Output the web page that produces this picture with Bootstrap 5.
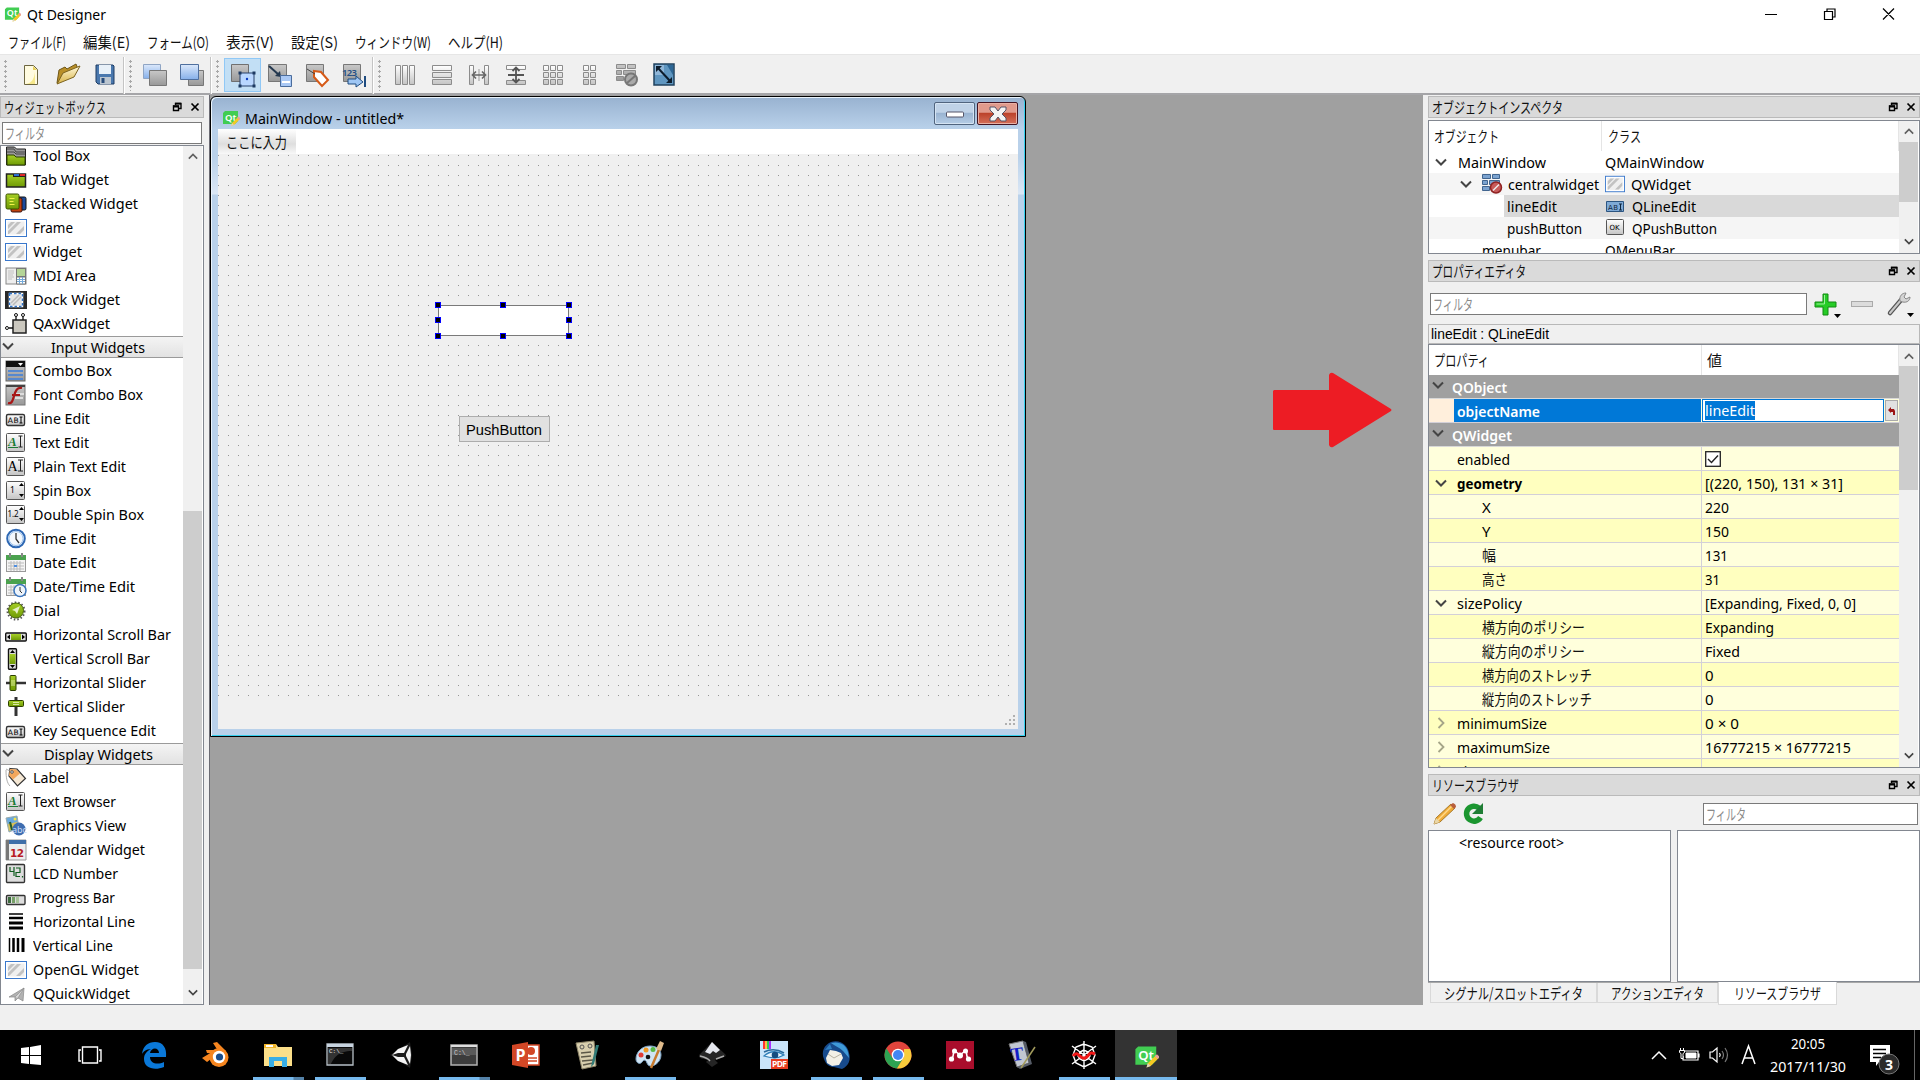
<!DOCTYPE html>
<html lang="ja">
<head>
<meta charset="utf-8">
<title>Qt Designer</title>
<link rel="stylesheet" href="https://cdn.jsdelivr.net/npm/bootstrap@5.3.0/dist/css/bootstrap.min.css">
<script src="https://cdn.jsdelivr.net/npm/bootstrap@5.3.0/dist/js/bootstrap.bundle.min.js"></script>
<style>
body{width:1920px;height:1080px;overflow:hidden;background:#f0f0f0;color:#000;font:15px/20px "Noto Sans","Noto Sans CJK JP",sans-serif}
svg{display:block;flex:none;overflow:visible}
[data-w]{display:inline-block;white-space:nowrap;flex:none}
[data-w]>span{display:inline-block;transform-origin:0 50%}
.titlebar{height:28px;background:#fff;padding:0 19px 0 4px}
.menus{height:26px;background:#fff;padding:2px 0 0 8px;gap:17px}
.menus span{line-height:24px}
.tools{height:41px;border-top:1px solid #e6e6e6;border-bottom:2px solid #a5a5a8;padding-top:2px}
.grip{width:3px;height:32px;background:radial-gradient(circle,#a8a8a8 1px,transparent 1.3px) 0 0/3px 5px}
.tsep{width:2px;height:37px;background:#c4c4c4;border-right:1px solid #fff}
.tool{width:37px;height:34px}
.tool.on{background:#c2dff5;border:1px solid #90c8f6}
.left-dock{width:209px;padding-top:1px}
.right-dock{width:499px;padding:1px 0 0 5px;border-left:2px solid #a0a0a0}
.dockhead{height:22px;background:#dadada;border:1px solid #bababa;padding:0 1px 0 3px}
.gothic{font-family:"Noto Sans CJK JP",sans-serif;color:#111}
.field{height:22px;background:#fff;border:1px solid #7a7a7a;color:#8a8a8a;padding-left:2px;display:flex;align-items:center}
.pane{background:#fff;border:1px solid #828790;overflow:hidden}
.wlist{margin-top:1px;width:204px;height:860px}
.wrow{height:24px;padding-left:4px;gap:6px}
.wrow svg{width:22px;height:22px}
.wrow [data-w]{margin-top:-2px}
.cat{height:22px;margin-bottom:1px;border-top:1px solid #9a9a9a;border-bottom:1px solid #9a9a9a;background:linear-gradient(#f4f4f4,#e2e2e2)}
.sbar{width:19px;background:#f0f0f0;flex:none;margin-right:1px}
.thumb{background:#cdcdcd}
.mdi{background:#a0a0a0;width:1212px;border-left:1px solid #6c6c74}
.subwin{left:0;top:0;width:816px;height:641px;border:1px solid #000;border-radius:6px 6px 0 0;background:linear-gradient(#98b2d0,#b9d1ea 32px,#b9d1ea 60px,#dbe7f5 97px,#b9d1ea 98px);box-shadow:inset 1px 1px #eaf4fc,inset -1px -1px #35d0ee;padding:1px 7px 6px 7px}
.subhead{height:31px;padding:4px 0 0 4px}
.wbtn{width:41px;height:23px;border-radius:2px}
.mini{border:1px solid #50647e;box-shadow:inset 0 0 0 1px #d5e4f3;background:linear-gradient(#bfd2e7 45%,#98b2d0 46%,#b5cde6)}
.shut{border:1px solid #431422;box-shadow:inset 0 0 0 1px #e8b0a4;background:linear-gradient(#e09a8c 45%,#ba3f27 46%,#d4705a)}
.submenu{height:25px;background:#fff}
.typehere{width:78px;background:linear-gradient(#fff,#dedede 60%,#f8f8f8);padding-left:8px}
.canvas{height:553px;background:#f0f0f0}
.ledit{left:220px;top:151px;width:131px;height:31px;background:#fff;border:1px solid #7a7a7a}
.hnd{width:6px;height:6px;background:#000;border:1px solid #00f}
.pbtn{left:241px;top:262px;width:91px;height:26px;background:#e1e1e1;border:1px solid #adadad;font:14.5px/26px "Liberation Sans",sans-serif;padding-left:6px}
.substat{height:22px;background:#f0f0f0}
.trow{height:22px}
.alt{background:#f5f5f5}
.prow{height:24px;border-bottom:1px solid #d3d0d8;background:#ffffdc}
.prow.deep{background:#ffffbf}
.prow.grp{background:#a0a0a0;color:#fff;border-color:#d8d8d8}
.pname{width:273px;flex:none;height:100%;border-right:1px solid #d3d0d8}
.pval{padding-left:3px}
.arr{width:28px;flex:none;padding-left:6px}
.i1{width:53px;flex:none}
.tabx{height:20px;border:1px solid #d9d9d9;border-top:0;background:#f0f0f0}
.tabx.cur{height:23px;background:#fff;margin-top:-1px}
.taskbar{height:50px;background:#000;color:#fff}
.slot{width:62px;height:50px}
.slot .run{width:51px;height:3px;background:#76b9ed;left:6px;bottom:0}
.run.two{background:linear-gradient(90deg,#76b9ed 40px,#5482a8 41px)!important}
.slot svg{width:28px;height:28px}
.slot.cur{background:#333}
.slot.cur .run{width:62px;left:0}
</style>
</head>
<body>
<svg width="0" height="0" class="position-absolute">
<defs>
<linearGradient id="gs" x2="0" y2="1"><stop stop-color="#fff"/><stop offset="1" stop-color="#c4c4c4"/></linearGradient>
<linearGradient id="gg" x2="0" y2="1"><stop stop-color="#c8c8c8"/><stop offset="1" stop-color="#989898"/></linearGradient>
<linearGradient id="gb" x2="0" y2="1"><stop stop-color="#dbe8fb"/><stop offset="1" stop-color="#86b0ea"/></linearGradient>
<linearGradient id="gy" x2="0" y2="1"><stop stop-color="#fff9dc"/><stop offset="1" stop-color="#d9b345"/></linearGradient>
<linearGradient id="gr" x2="0" y2="1"><stop stop-color="#a6cf26"/><stop offset="1" stop-color="#6f9a05"/></linearGradient>
</defs>
<symbol id="qt" viewBox="0 0 18 17"><path d="M3 1h13v10l-3 3H1V3z" fill="#41cd52"/><text x="3" y="10.5" font-family="Noto Sans" font-size="9.5" font-weight="600" fill="#fff">Qt</text><path d="M9 16l1-3 6-6 2 2-6 6z" fill="#f5c823"/><path d="M15 8l1.500-1.500 2 2L17 10z" fill="#e8a09a"/><path d="M9 16l1-3 2 2z" fill="#dcd5c0"/></symbol>
<symbol id="dn" viewBox="0 0 12 8"><path d="M1 1.500l5 5 5-5" fill="none" stroke="#444" stroke-width="2"/></symbol>
<symbol id="up" viewBox="0 0 12 8"><path d="M1 6.500l5-5 5 5" fill="none" stroke="#606060" stroke-width="2"/></symbol>
<symbol id="rt" viewBox="0 0 8 12"><path d="M1.500 1l5 5-5 5" fill="none" stroke="#a5a588" stroke-width="1.800"/></symbol>
<symbol id="fx" viewBox="0 0 30 10"><path d="M3.500 3V1.500h5.500v5H7M1.500 4h5v4.500h-5z" fill="none" stroke="#000" stroke-width="1.400"/><path d="M1 4.500h6M3 1.700h6" stroke="#000" stroke-width="1.800"/><path d="M19.500 1.500l7 7m0-7l-7 7" stroke="#000" stroke-width="1.700"/></symbol>
<symbol id="toolbox" viewBox="0 0 22 22"><path d="M1.500 20V2h8l2 2h9v16z" fill="#9a9a9a" stroke="#222"/><path d="M2 4h7l2 3h9M2 7h7l2 2h9" fill="none" stroke="#444"/><path d="M2 10h7l2 2h9v8H2z" fill="url(#gr)" stroke="#2d4000"/></symbol>
<symbol id="tab" viewBox="0 0 22 22"><path d="M1.500 18V5h19v13z" fill="url(#gr)" stroke="#222" stroke-width="1.500"/><path d="M8 5h13v3H8z" fill="#222"/><path d="M9 5h5v2H9z" fill="#2b6fd0"/><path d="M15 5h5v2h-5z" fill="#e02828"/></symbol>
<symbol id="stack" viewBox="0 0 22 22"><rect x="10" y="4" width="11" height="13" rx="1.500" fill="#1a4a9c" stroke="#111"/><rect x="6" y="5" width="11" height="14" rx="1.500" fill="#c0410c" stroke="#311"/><rect x="1" y="1" width="13" height="15" rx="1.500" fill="url(#gr)" stroke="#384f00"/><path d="M4.500 5.500h5M4.500 8.500h4M4.500 11.500h5" stroke="#f2f24a"/></symbol>
<symbol id="frame" viewBox="0 0 22 22"><rect x=".5" y="2.500" width="21" height="17" fill="#fff" stroke="#3a78cc"/><rect x="2.500" y="4.500" width="17" height="13" fill="#efefef"/><path d="M3 12l7-7h-4l-3 3zM4 17l12-12h-4L3 14v3zM11 17l8-8v4l-4 4z" fill="#c2c2c2"/></symbol>
<symbol id="mdi" viewBox="0 0 22 22"><rect x="1" y="3" width="20" height="16" fill="#eee" stroke="#888"/><rect x="11.500" y="3.500" width="9" height="8" fill="#b5d596" stroke="#777"/><path d="M3 6h6M3 8h6M3 10h5M3 12h6M3 14h4" stroke="#c0c0c0"/><path d="M11.500 12h9v7h-9z" fill="#fff" stroke="#777"/><path d="M12 14.500h8M12 16.500h8M14.500 12v7M17.500 12v7" stroke="#74a9d8"/></symbol>
<symbol id="dock" viewBox="0 0 22 22"><rect x="0" y="2" width="22" height="18" fill="#292929"/><rect x="4.500" y="4.500" width="13" height="13" fill="#e4e4e4" stroke="#fff" stroke-width="1.500"/><rect x="4.500" y="4.500" width="13" height="13" fill="none" stroke="#3073c8" stroke-width="1.500" stroke-dasharray="2.500 2"/><path d="M6 14l8-8M8 16l8-8" stroke="#bbb" stroke-width="1.500"/></symbol>
<symbol id="ax" viewBox="0 0 22 22"><rect x="8" y="7" width="13" height="13" fill="#cbc8bf" stroke="#222" stroke-width="1.500"/><path d="M11 7V3M18 7V3M8 15H4" stroke="#111" stroke-width="1.300"/><circle cx="11" cy="2" r="1.500" fill="#fff" stroke="#111"/><circle cx="18" cy="2" r="1.500" fill="#fff" stroke="#111"/><circle cx="2" cy="15" r="1.500" fill="#fff" stroke="#111"/></symbol>
<symbol id="combo" viewBox="0 0 22 22"><rect x="1" y="1" width="19" height="20" fill="url(#gg)" stroke="#666"/><rect x="1" y="1" width="19" height="6" fill="#111"/><path d="M13 3h5l-2.500 3z" fill="#fff"/><path d="M3 10h15v2H3zM3 14h15v2H3zM3 18h15v2H3z" fill="#5588cf"/></symbol>
<symbol id="fcombo" viewBox="0 0 22 22"><rect x="1" y="1" width="19" height="20" fill="url(#gg)" stroke="#777"/><path d="M1 1h19v2H1z" fill="#444"/><path d="M11 10h8M10 14h8" stroke="#ddd" stroke-width="2"/><path d="M3 19c4 1 4.500-2 6-7S12 3 17 4M7 11h8" fill="none" stroke="#a81616" stroke-width="2.200"/></symbol>
<symbol id="line" viewBox="0 0 22 22"><rect x="1.500" y="6.500" width="18" height="11" rx="1.500" fill="url(#gs)" stroke="#333" stroke-width="1.400"/><text x="2.700" y="15" font-family="DejaVu Sans" font-size="7.500" textLength="11">AB</text><path d="M14.500 9h3M14.500 15h3M16 9v6" stroke="#000"/></symbol>
<symbol id="ai" viewBox="0 0 22 22"><rect x="1.500" y="1.500" width="18" height="18" rx="1" fill="url(#gs)" stroke="#555"/><text x="2.500" y="15" font-family="Liberation Serif" font-size="14">A</text><path d="M13 4h5M13 15h5M15.500 4v11" stroke="#222"/></symbol>
<symbol id="aig" viewBox="0 0 22 22"><rect x="1.500" y="1.500" width="18" height="18" rx="1" fill="url(#gs)" stroke="#555"/><text x="3" y="14" font-family="Liberation Serif" font-style="italic" font-weight="700" font-size="13" fill="#1c7a34">A</text><path d="M3 15.500h10" stroke="#1c7a34"/><path d="M13.500 4h4M13.500 15h4M15.500 4v11" stroke="#222"/></symbol>
<symbol id="spin" viewBox="0 0 22 22"><rect x="1.500" y="1.500" width="18" height="18" rx="1" fill="url(#gs)" stroke="#555"/><text x="5" y="13" font-family="Noto Sans" font-size="8.500">1</text><path d="M14 6l2.500-3L19 6zM14 14l2.500 3 2.500-3z"/></symbol>
<symbol id="dspin" viewBox="0 0 22 22"><rect x="1.500" y="1.500" width="18" height="18" rx="1" fill="url(#gs)" stroke="#555"/><text x="2.500" y="13" font-family="Noto Sans" font-size="8" textLength="11">1.2</text><path d="M14 6l2.500-3L19 6zM14 14l2.500 3 2.500-3z"/></symbol>
<symbol id="clock" viewBox="0 0 22 22"><circle cx="11" cy="10.500" r="8.800" fill="#f4f8fc" stroke="#2e68b4" stroke-width="2"/><circle cx="11" cy="10.500" r="7" fill="none" stroke="#9dc3ee"/><path d="M11 5v6l3 4" fill="none" stroke="#333" stroke-width="1.300"/></symbol>
<symbol id="date" viewBox="0 0 22 22"><rect x="1.500" y="3.500" width="19" height="16" fill="#f4f4f4" stroke="#999"/><path d="M1 3h20v5H1z" fill="#4ba24f"/><path d="M5 1v4M17 1v4" stroke="#888" stroke-width="2"/><path d="M3 11h16M3 14h16M3 17h16M6 9v10M9 9v10M12 9v10M15 9v10" stroke="#bbb"/><path d="M9 13h3v2H9z" fill="#4f8fe0"/></symbol>
<symbol id="dtime" viewBox="0 0 22 22"><use href="#date"/><circle cx="15" cy="14.500" r="6" fill="#eef4fb" stroke="#3a75bd" stroke-width="1.500"/><path d="M15 11v4l2 2" fill="none" stroke="#333"/></symbol>
<symbol id="dial" viewBox="0 0 22 22"><circle cx="11" cy="11" r="8.500" fill="none" stroke="#555" stroke-width="2" stroke-dasharray="1.500 2"/><circle cx="11" cy="10.500" r="7.500" fill="url(#gr)" stroke="#44610a"/><path d="M15 6l-3 8-2-3-3-1z" fill="#e6f0c8"/></symbol>
<symbol id="hsb" viewBox="0 0 22 22"><rect x=".7" y="9" width="20.600" height="8" rx="1" fill="#ddd" stroke="#111" stroke-width="1.400"/><path d="M6 10h10v6H6z" fill="url(#gr)"/><path d="M5 10.500v5L2 13zM17 10.500v5l3-2.500z"/></symbol>
<symbol id="vsb" viewBox="0 0 22 22"><rect x="3.500" y=".7" width="8" height="20.600" rx="1" fill="#ddd" stroke="#111" stroke-width="1.400"/><path d="M4.500 6h6v10h-6z" fill="url(#gr)"/><path d="M5 5h5L7.500 2zM5 17h5l-2.500 3z"/></symbol>
<symbol id="hsl" viewBox="0 0 22 22"><path d="M1 11h20" stroke="#333" stroke-width="2.500"/><rect x="5" y="3.500" width="6" height="15" rx="1" fill="url(#gr)" stroke="#2d4000"/><path d="M7 8v6M9 8v6" stroke="#eef5c8" stroke-width=".8"/></symbol>
<symbol id="vsl" viewBox="0 0 22 22"><path d="M11 1v19" stroke="#333" stroke-width="3"/><rect x="3.500" y="4.500" width="15" height="6" rx="1" fill="url(#gr)" stroke="#2d4000"/><path d="M8 6.500h6M8 8.500h6" stroke="#eef5c8" stroke-width=".8"/></symbol>
<symbol id="label" viewBox="0 0 22 22"><path d="M5 1.500l7 .500 8.500 9.500-8 7.500L4 9z" fill="#f5e7d3" stroke="#333" stroke-width="1.200"/><path d="M5 2l6 .5 4 4-7 6-4-4z" fill="#f3a75c"/><circle cx="7" cy="5" r="1.300" fill="#fff" stroke="#555"/><path d="M1 2l6 3M1 3c0 8 1 13 4 16" fill="none" stroke="#999" stroke-width=".8"/></symbol>
<symbol id="gview" viewBox="0 0 22 22"><path d="M1 3l11-2 2 12-10 4z" fill="#69a9dd" stroke="#9aa"/><path d="M3 9l9-2v6l-8 3z" fill="#d9c257"/><path d="M5 7l2 8" stroke="#24592a" stroke-width="2"/><circle cx="10" cy="4" r="1.500" fill="#f8e24a"/><circle cx="14" cy="14" r="6.500" fill="#3f6db0"/><text x="7" y="18" font-family="Noto Sans" font-size="9" fill="#c8dcf5">abc</text></symbol>
<symbol id="cal" viewBox="0 0 22 22"><path d="M1 1h20v20H1z" fill="#eee" stroke="#999"/><path d="M1 1h20v4H1z" fill="#3f6fa8"/><path d="M1 1h3v20H1z" fill="#777"/><text x="5" y="18" font-family="DejaVu Sans" font-size="10.500" font-weight="700" fill="#b81c24" textLength="14">12</text></symbol>
<symbol id="lcd" viewBox="0 0 22 22"><rect x="1.500" y="1.500" width="18" height="18" rx="1" fill="#ddd" stroke="#333" stroke-width="1.400"/><path d="M5 4v4.500h4M9 4v9M11 5h4v4.500h-4v4h4M17.500 13v1.500" fill="none" stroke="#0e5c1e" stroke-width="1.200"/></symbol>
<symbol id="prog" viewBox="0 0 22 22"><rect x="1.500" y="8.500" width="18.500" height="9" rx="1" fill="#ddd" stroke="#333" stroke-width="1.400"/><path d="M3 10h3v6H3z" fill="#3d6a3e"/><path d="M7 10h3v6H7z" fill="#76a068"/><path d="M11 10h3v6h-3z" fill="#a9c49c"/></symbol>
<symbol id="hl" viewBox="0 0 22 22"><path d="M4 3h14" stroke="#000" stroke-width="1.500"/><path d="M4 7h14" stroke="#000" stroke-width="2.500"/><path d="M4 12h14M4 17h14" stroke="#000" stroke-width="3"/></symbol>
<symbol id="vl" viewBox="0 0 22 22"><path d="M4.500 3v14" stroke="#000" stroke-width="1.500"/><path d="M8.500 3v14M13 3v14" stroke="#000" stroke-width="2.500"/><path d="M18 3v14" stroke="#000" stroke-width="3"/></symbol>
<symbol id="plane" viewBox="0 0 22 22"><path d="M4 14L19 5l-1 13-5-3-3 3v-4z" fill="#b2b2b2" stroke="#888" stroke-width=".7"/><path d="M10 14l9-9-6 10" fill="#d8d8d8" stroke="#888" stroke-width=".6"/></symbol>
</svg>

<div class="d-flex flex-column vh-100">
<header class="titlebar d-flex align-items-center">
<svg width="17" height="17"><use href="#qt"/></svg><span class="me-auto" style="margin-left:6px" data-w="79">Qt Designer</span>
<svg width="150" height="28" viewBox="0 0 150 28" fill="none" stroke="#000" stroke-width="1.200"><path d="M14 14.500h12M73.500 11.500h8v8h-8zM76 11V9h8v8h-2M132 8.500l11 11m0-11l-11 11"/></svg>
</header>
<nav class="menus d-flex gothic">
<span data-w="58">ファイル(F)</span><span data-w="47">編集(E)</span><span data-w="62">フォーム(O)</span><span data-w="48">表示(V)</span><span data-w="47">設定(S)</span><span data-w="76">ウィンドウ(W)</span><span data-w="55">ヘルプ(H)</span>
</nav>
<div class="tools d-flex align-items-center">
<div class="grip" style="margin:0 5px 0 4px"></div>
<div class="tool d-flex align-items-center justify-content-center"><svg width="22" height="24"><path d="M4.500 2.500h9l4 4v15h-13z" fill="#fffbe0" stroke="#6d6640"/><path d="M13 3v4h4z" fill="#e6cf5c"/><path d="M15 9v12H6c6-1 8-5 9-12z" fill="#f6e88c"/></svg></div>
<div class="tool d-flex align-items-center justify-content-center"><svg width="26" height="24"><path d="M2 20L4 7l6-3 2 2 9-5 2 5z" fill="#b98f28" stroke="#6e5618"/><path d="M2 21L8 10l17-7-6 11z" fill="url(#gy)" stroke="#7c6320"/></svg></div>
<div class="tool d-flex align-items-center justify-content-center"><svg width="22" height="24"><path d="M2 2h17l1 1v18H4l-2-2z" fill="#4a78ae" stroke="#1e3d64"/><path d="M5 2h12v9H5z" fill="#e8f0f8"/><path d="M6 14h11v7H6z" fill="#bcc6d0"/><path d="M7.500 15h3v5h-3z" fill="#294d7c"/></svg></div>
<div class="tsep"></div><div class="grip ms-1"></div>
<div class="tool d-flex align-items-center justify-content-center ms-1"><svg width="26" height="24"><path d="M1.500 1.500h17v14h-17z" fill="url(#gb)" stroke="#8fa5c4"/><path d="M7.500 7.500h17v15h-17z" fill="url(#gg)" stroke="#777"/></svg></div>
<div class="tool d-flex align-items-center justify-content-center"><svg width="26" height="24"><path d="M9.500 7.500h15v15h-15z" fill="url(#gg)" stroke="#777"/><path d="M1.500 1.500h18v15h-18z" fill="url(#gb)" stroke="#4f6f9e"/></svg></div>
<div class="tsep"></div><div class="grip ms-1" style="margin-right:5px"></div>
<div class="tool on d-flex align-items-center justify-content-center"><svg width="26" height="26"><path d="M1.500 2.500h17v17h-17z" fill="url(#gg)" stroke="#707070"/><rect x="10" y="11" width="14" height="13" fill="#b9d7ff" stroke="#28436d"/><path d="M8.500 9.500h3v3h-3zM22.500 9.500h3v3h-3zM8.500 22.500h3v3h-3zM22.500 22.500h3v3h-3z" fill="#1d3a62"/><circle cx="17" cy="17" r="1.200" fill="#0b3cc0"/></svg></div>
<div class="tool d-flex align-items-center justify-content-center"><svg width="26" height="25"><path d="M1.500 1.500h18v17h-18z" fill="url(#gg)" stroke="#777"/><path d="M2 3l10 9" stroke="#24384f" stroke-width="2"/><path d="M14 14l-6-1 5-5z" fill="#24384f"/><path d="M13.500 12.500h11v11h-11z" fill="#a9c8f5" stroke="#4a6c9c"/><path d="M15 18h8v2h-8z" fill="#fff"/></svg></div>
<div class="tool d-flex align-items-center justify-content-center"><svg width="26" height="25"><path d="M2.500 1.500h17v17h-17z" fill="url(#gg)" stroke="#777"/><path d="M10 8l7 1 7 8-6 6-8-9z" fill="#fff" stroke="#d65a18" stroke-width="2"/><path d="M3 6l8 5" stroke="#444"/></svg></div>
<div class="tool d-flex align-items-center justify-content-center"><svg width="26" height="25"><path d="M2.500 1.500h17v17h-17z" fill="url(#gg)" stroke="#777"/><text x="1" y="13" font-family="Noto Sans" font-size="9.500" font-weight="600" fill="#234f85" textLength="15">123</text><path d="M7 16h8v-3l7 6-7 5v-3H7z" fill="#9ec6f4" stroke="#1f4c80"/><path d="M24 13v11" stroke="#1f4c80" stroke-width="2"/></svg></div>
<div class="tsep"></div><div class="grip ms-1"></div>
<div class="tool d-flex align-items-center justify-content-center" style="margin-left:5px"><svg width="22" height="24" fill="url(#gs)" stroke="#8c8c8c"><path d="M1.500 2.500h5v19h-5zM8.500 2.500h5v19h-5zM15.500 2.500h5v19h-5z"/></svg></div>
<div class="tool d-flex align-items-center justify-content-center"><svg width="22" height="24" fill="url(#gs)" stroke="#8c8c8c"><path d="M1.500 2.500h19v5h-19zM1.500 9.500h19v5h-19zM1.500 16.500h19v5h-19z"/></svg></div>
<div class="tool d-flex align-items-center justify-content-center"><svg width="22" height="24" fill="url(#gs)" stroke="#8c8c8c"><path d="M1.500 2.500h4v19h-4zM16.500 2.500h4v19h-4z"/><path d="M11 6v12" stroke="#999"/><path d="M4 12h14M8 8.500L4.500 12 8 15.500M14 8.500l3.500 3.500-3.500 3.500" fill="none" stroke="#666" stroke-width="1.700"/></svg></div>
<div class="tool d-flex align-items-center justify-content-center"><svg width="22" height="24" fill="url(#gs)" stroke="#8c8c8c"><path d="M1.500 2.500h19v4h-19zM1.500 17.500h19v4h-19z"/><path d="M3 12h16M11 5v14M7.500 8L11 4.500 14.500 8M7.500 16l3.500 3.500 3.500-3.500" fill="none" stroke="#555" stroke-width="1.800"/></svg></div>
<div class="tool d-flex align-items-center justify-content-center"><svg width="22" height="24" fill="url(#gs)" stroke="#8c8c8c"><path d="M1.500 2.500h5v5h-5zM8.500 2.500h5v5h-5zM15.500 2.500h5v5h-5zM1.500 9.500h5v5h-5zM8.500 9.500h5v5h-5zM15.500 9.500h5v5h-5zM1.500 16.500h5v5h-5zM8.500 16.500h5v5h-5zM15.500 16.500h5v5h-5z"/></svg></div>
<div class="tool d-flex align-items-center justify-content-center"><svg width="22" height="24" fill="url(#gs)" stroke="#8c8c8c"><path d="M4.500 2.500h5v5h-5zM11.500 2.500h5v5h-5zM4.500 9.500h5v5h-5zM11.500 9.500h5v5h-5zM4.500 16.500h5v5h-5zM11.500 16.500h5v5h-5z"/></svg></div>
<div class="tool d-flex align-items-center justify-content-center"><svg width="24" height="24" fill="url(#gg)" stroke="#8c8c8c"><path d="M1.500 1.500h9v4h-9zM12.500 1.500h8v4h-8zM1.500 7.500h5v4h-5zM8.500 7.500h12v4h-12zM1.500 13.500h7v4h-7z"/><circle cx="16" cy="16.500" r="6" fill="#aaa" stroke="#777" stroke-width="2"/><path d="M12 20l8-7" stroke="#777" stroke-width="2"/></svg></div>
<div class="tool d-flex align-items-center justify-content-center"><svg width="22" height="24"><path d="M1 1h20v21H1z" fill="#5f96c0" stroke="#20425e" stroke-width="1.500"/><path d="M2 2h9v10H2z" fill="#8fb6d8"/><path d="M14 2h6v10z" fill="#2d6796"/><path d="M5 5l12 13" stroke="#0c1c2c" stroke-width="2"/><path d="M3 3h6l-6 6zM19 20h-6l6-6z" fill="#0c1c2c"/></svg></div>
</div>

<main class="d-flex" style="height:910px">
<aside class="left-dock">
<div class="dockhead d-flex align-items-center gothic" style="width:204px"><span class="me-auto" data-w="102">ウィジェットボックス</span><svg width="30" height="10"><use href="#fx"/></svg></div>
<div class="field gothic" style="width:200px;margin:4px 0 0 2px"><span data-w="40">フィルタ</span></div>
<div class="pane wlist d-flex">
<div class="flex-grow-1" style="margin-top:-2px">
<div class="wrow d-flex align-items-center"><svg><use href="#toolbox"/></svg><span data-w="57">Tool Box</span></div>
<div class="wrow d-flex align-items-center"><svg><use href="#tab"/></svg><span data-w="76">Tab Widget</span></div>
<div class="wrow d-flex align-items-center"><svg><use href="#stack"/></svg><span data-w="105">Stacked Widget</span></div>
<div class="wrow d-flex align-items-center"><svg><use href="#frame"/></svg><span data-w="40">Frame</span></div>
<div class="wrow d-flex align-items-center"><svg><use href="#frame"/></svg><span data-w="49">Widget</span></div>
<div class="wrow d-flex align-items-center"><svg><use href="#mdi"/></svg><span data-w="63">MDI Area</span></div>
<div class="wrow d-flex align-items-center"><svg><use href="#dock"/></svg><span data-w="87">Dock Widget</span></div>
<div class="wrow d-flex align-items-center"><svg><use href="#ax"/></svg><span data-w="77">QAxWidget</span></div>
<div class="cat d-flex align-items-center"><svg width="12" height="8" style="margin:-3px 37px 0 1px"><use href="#dn"/></svg><span data-w="94">Input Widgets</span></div>
<div class="wrow d-flex align-items-center"><svg><use href="#combo"/></svg><span data-w="79">Combo Box</span></div>
<div class="wrow d-flex align-items-center"><svg><use href="#fcombo"/></svg><span data-w="110">Font Combo Box</span></div>
<div class="wrow d-flex align-items-center"><svg><use href="#line"/></svg><span data-w="57">Line Edit</span></div>
<div class="wrow d-flex align-items-center"><svg><use href="#aig"/></svg><span data-w="56">Text Edit</span></div>
<div class="wrow d-flex align-items-center"><svg><use href="#ai"/></svg><span data-w="93">Plain Text Edit</span></div>
<div class="wrow d-flex align-items-center"><svg><use href="#spin"/></svg><span data-w="58">Spin Box</span></div>
<div class="wrow d-flex align-items-center"><svg><use href="#dspin"/></svg><span data-w="111">Double Spin Box</span></div>
<div class="wrow d-flex align-items-center"><svg><use href="#clock"/></svg><span data-w="63">Time Edit</span></div>
<div class="wrow d-flex align-items-center"><svg><use href="#date"/></svg><span data-w="63">Date Edit</span></div>
<div class="wrow d-flex align-items-center"><svg><use href="#dtime"/></svg><span data-w="102">Date/Time Edit</span></div>
<div class="wrow d-flex align-items-center"><svg><use href="#dial"/></svg><span data-w="27">Dial</span></div>
<div class="wrow d-flex align-items-center"><svg><use href="#hsb"/></svg><span data-w="138">Horizontal Scroll Bar</span></div>
<div class="wrow d-flex align-items-center"><svg><use href="#vsb"/></svg><span data-w="117">Vertical Scroll Bar</span></div>
<div class="wrow d-flex align-items-center"><svg><use href="#hsl"/></svg><span data-w="113">Horizontal Slider</span></div>
<div class="wrow d-flex align-items-center"><svg><use href="#vsl"/></svg><span data-w="92">Vertical Slider</span></div>
<div class="wrow d-flex align-items-center"><svg><use href="#line"/></svg><span data-w="123">Key Sequence Edit</span></div>
<div class="cat d-flex align-items-center"><svg width="12" height="8" style="margin:-3px 30px 0 1px"><use href="#dn"/></svg><span data-w="109">Display Widgets</span></div>
<div class="wrow d-flex align-items-center"><svg><use href="#label"/></svg><span data-w="36">Label</span></div>
<div class="wrow d-flex align-items-center"><svg><use href="#aig"/></svg><span data-w="83">Text Browser</span></div>
<div class="wrow d-flex align-items-center"><svg><use href="#gview"/></svg><span data-w="93">Graphics View</span></div>
<div class="wrow d-flex align-items-center"><svg><use href="#cal"/></svg><span data-w="112">Calendar Widget</span></div>
<div class="wrow d-flex align-items-center"><svg><use href="#lcd"/></svg><span data-w="85">LCD Number</span></div>
<div class="wrow d-flex align-items-center"><svg><use href="#prog"/></svg><span data-w="82">Progress Bar</span></div>
<div class="wrow d-flex align-items-center"><svg><use href="#hl"/></svg><span data-w="102">Horizontal Line</span></div>
<div class="wrow d-flex align-items-center"><svg><use href="#vl"/></svg><span data-w="80">Vertical Line</span></div>
<div class="wrow d-flex align-items-center"><svg><use href="#frame"/></svg><span data-w="106">OpenGL Widget</span></div>
<div class="wrow d-flex align-items-center"><svg><use href="#plane"/></svg><span data-w="97">QQuickWidget</span></div>
</div>
<div class="sbar d-flex flex-column align-items-center pb-2"><svg width="10" height="7" style="margin-top:7px"><use href="#up"/></svg><div class="thumb w-100 mb-auto" style="margin-top:351px;height:458px"></div><svg width="10" height="7"><use href="#dn"/></svg></div>
</div>
</aside>

<section class="mdi position-relative">
<div class="subwin position-absolute" style="margin-top:1px">
<div class="subhead d-flex"><svg width="18" height="17" style="margin-top:8px"><use href="#qt"/></svg><span data-w="159" style="margin:6px auto 0 5px">MainWindow - untitled*</span>
<div class="wbtn mini d-flex align-items-center justify-content-center" style="margin-right:2px"><svg width="18" height="8" style="margin-top:2px"><rect x=".5" y="1" width="17" height="5" rx="1" fill="#fff" stroke="#555568"/></svg></div>
<div class="wbtn shut d-flex align-items-center justify-content-center"><svg width="18" height="16"><path d="M1 1h5l3 4 3-4h5v3l-4 4 4 4v3h-5l-3-4-3 4H1v-3l4-4-4-4z" fill="#f4f4f4" stroke="#555568"/></svg></div></div>
<div class="submenu d-flex gothic"><div class="typehere d-flex align-items-center"><span data-w="61">ここに入力</span></div></div>
<div class="canvas position-relative">
<svg width="800" height="546" class="position-absolute"><defs><pattern id="dots" width="10" height="10" patternUnits="userSpaceOnUse"><rect y="1" width="1" height="1" fill="#969696"/></pattern></defs><rect width="800" height="546" fill="url(#dots)"/></svg>
<div class="ledit position-absolute"></div>
<i class="hnd position-absolute" style="left:217px;top:148px"></i><i class="hnd position-absolute" style="left:282px;top:148px"></i><i class="hnd position-absolute" style="left:348px;top:148px"></i><i class="hnd position-absolute" style="left:217px;top:163px"></i><i class="hnd position-absolute" style="left:348px;top:163px"></i><i class="hnd position-absolute" style="left:217px;top:179px"></i><i class="hnd position-absolute" style="left:282px;top:179px"></i><i class="hnd position-absolute" style="left:348px;top:179px"></i>
<div class="pbtn position-absolute"><span data-w="76">PushButton</span></div>
</div>
<div class="substat d-flex justify-content-end align-items-end"><svg width="14" height="14" fill="#b0b0b0"><path d="M9 0h2v2H9zM9 4h2v2H9zM5 4h2v2H5zM9 8h2v2H9zM5 8h2v2H5zM1 8h2v2H1z"/></svg></div>
</div>
<svg class="position-absolute" style="left:1063px;top:277px" width="120" height="76"><path d="M1 18h55V3q1-3 4-2l58 36q1 1 0 2L60 75q-3 1-4-2V58H1q-1 0-1-1V19z" fill="#ed1c24"/></svg>
</section>

<aside class="right-dock">
<div class="dockhead d-flex align-items-center gothic"><span class="me-auto" data-w="131">オブジェクトインスペクタ</span><svg width="30" height="10"><use href="#fx"/></svg></div>
<div class="pane d-flex" style="height:134px;margin-top:2px">
<div class="flex-grow-1">
<div class="d-flex gothic" style="height:30px"><div class="d-flex align-items-center" style="width:173px;padding-left:5px;border-right:1px solid #e5e5e5"><span data-w="65">オブジェクト</span></div><div class="d-flex align-items-center flex-grow-1" style="padding-left:6px;border-right:1px solid #e5e5e5"><span data-w="33">クラス</span></div></div>
<div class="trow d-flex align-items-center"><svg width="12" height="8" style="margin:0 11px 0 6px"><use href="#dn"/></svg><span data-w="88">MainWindow</span><span data-w="99" style="margin-left:59px">QMainWindow</span></div>
<div class="trow alt d-flex align-items-center"><svg width="12" height="8" style="margin:0 10px 0 31px"><use href="#dn"/></svg><svg width="20" height="20" fill="#7ba3d0" stroke="#41658f"><path d="M.5.5h8v4h-8zM10.500.5h7v4h-7zM.5 6.500h5v4h-5zM7.500 6.500h10v4h-10zM.5 12.500h7v4h-7z"/><circle cx="14" cy="13.500" r="5.500" fill="#c75a5a" stroke="#8e2222" stroke-width="1.500"/><path d="M11 16.500l6-6" stroke="#eee" stroke-width="1.500"/></svg><span data-w="91" style="margin-left:6px">centralwidget</span><svg width="20" height="20" style="margin-left:6px"><use href="#frame"/></svg><span data-w="60" style="margin-left:6px">QWidget</span></div>
<div class="trow d-flex"><div style="width:75px"></div><div class="d-flex align-items-center flex-grow-1" style="background:#d9d9d9;padding-left:3px"><span data-w="50">lineEdit</span><svg width="20" height="20" style="margin-left:48px"><path d="M1.500 5.500h17v10h-17z" fill="#7faad6" stroke="#2b5480"/><text x="3" y="13.500" font-family="DejaVu Sans" font-size="7" textLength="10" fill="#10263f">AB</text><path d="M14 8h3M14 14h3M15.500 8v6" stroke="#10263f"/></svg><span data-w="64" style="margin-left:7px">QLineEdit</span></div></div>
<div class="trow alt d-flex align-items-center"><span data-w="75" style="margin-left:78px">pushButton</span><svg width="20" height="20" style="margin-left:23px"><rect x="1.500" y="1.500" width="17" height="15" rx="1" fill="url(#gs)" stroke="#555"/><text x="4.500" y="12" font-family="DejaVu Sans" font-size="7">OK</text></svg><span data-w="85" style="margin-left:7px">QPushButton</span></div>
<div class="trow d-flex align-items-center"><span data-w="59" style="margin-left:53px">menubar</span><span data-w="70" style="margin-left:64px">QMenuBar</span></div>
</div>
<div class="sbar d-flex flex-column align-items-center pb-2"><svg width="10" height="7" style="margin-top:7px"><use href="#up"/></svg><div class="thumb w-100 mb-auto" style="margin-top:7px;height:60px"></div><svg width="10" height="7"><use href="#dn"/></svg></div>
</div>
<div class="dockhead d-flex align-items-center gothic" style="margin-top:6px"><span class="me-auto" data-w="94">プロパティエディタ</span><svg width="30" height="10"><use href="#fx"/></svg></div>
<div class="d-flex align-items-center" style="height:42px;padding:1px 0 0 2px">
<div class="field gothic" style="width:377px"><span data-w="40">フィルタ</span></div>
<svg width="28" height="26" style="margin:2px 0 0 7px"><path d="M9 2h5v8h8v5h-8v8H9v-8H1v-5h8z" fill="#26cc26" stroke="#128a12"/><path d="M10.500 3v9h-8" fill="none" stroke="#9df09d"/><path d="M20 22h7l-3.500 4z"/></svg>
<svg width="22" height="8" style="margin-left:9px"><rect x=".5" y="1.500" width="21" height="5" fill="#dcdcdc" stroke="#aaa"/></svg>
<svg width="30" height="26" style="margin-left:14px"><path d="M3 22L14 9" stroke="#555" stroke-width="4.500" stroke-linecap="round"/><path d="M3 22L14 9" stroke="#c9c9c9" stroke-width="2" stroke-linecap="round"/><path d="M13 10c-1-5 2-8 6-8l-2 4 2 2 4-2c0 4-4 7-10 4z" fill="#d4d4d4" stroke="#888"/><path d="M20 22h7l-3.500 4z"/></svg>
</div>
<div style="height:20px;border:1px solid #b8b8b8;padding-left:2px;font-family:'Liberation Sans',sans-serif;line-height:18px"><span data-w="118">lineEdit : QLineEdit</span></div>
<div class="pane d-flex" style="height:424px">
<div class="flex-grow-1">
<div class="d-flex gothic" style="height:30px"><div class="d-flex align-items-center" style="width:273px;padding-left:5px;border-right:1px solid #e5e5e5"><span data-w="55">プロパティ</span></div><div class="d-flex align-items-center flex-grow-1" style="padding-left:5px;border-right:1px solid #e5e5e5"><span data-w="15">値</span></div></div>
<div class="prow grp d-flex align-items-center fw-semibold"><svg width="12" height="8" style="margin:-3px 8px 0 3px"><use href="#dn"/></svg><span data-w="55">QObject</span></div>
<div class="prow d-flex align-items-center"><div style="width:25px;height:100%;background:#ffefdc"></div><div class="d-flex align-items-center fw-semibold text-white" style="width:247px;height:100%;background:#0078d7;padding-left:3px"><span data-w="83">objectName</span></div><div class="d-flex align-items-center bg-white" style="width:182px;height:23px;border:1px solid #0078d7;margin-left:1px;padding-left:2px"><div class="text-white" style="background:#0078d7;width:50px;height:19px;line-height:19px"><span data-w="50">lineEdit</span></div></div><div class="d-flex align-items-center justify-content-center" style="width:13px;height:21px;margin-left:1px;border:1px solid #aaa;background:#e1e1e1"><svg width="8" height="8"><path d="M0 3l3-3v2h3l1 2v4H5V5H3v1z" fill="#9c1414"/></svg></div></div>
<div class="prow grp d-flex align-items-center fw-semibold"><svg width="12" height="8" style="margin:-3px 8px 0 3px"><use href="#dn"/></svg><span data-w="60">QWidget</span></div>
<div class="prow d-flex align-items-center"><div class="pname d-flex align-items-center"><div class="arr"></div><span data-w="53">enabled</span></div><div class="pval"><svg width="16" height="16"><rect x=".7" y=".7" width="14.600" height="14.600" fill="#fff" stroke="#222" stroke-width="1.300"/><path d="M3 8l3.500 3.500L13 4.500" fill="none" stroke="#222" stroke-width="1.400"/></svg></div></div>
<div class="prow deep d-flex align-items-center"><div class="pname d-flex align-items-center"><div class="arr"><svg width="12" height="8"><use href="#dn"/></svg></div><b data-w="65">geometry</b></div><div class="pval"><span data-w="138">[(220, 150), 131 × 31]</span></div></div>
<div class="prow d-flex align-items-center"><div class="pname d-flex align-items-center"><div class="i1"></div><span>X</span></div><div class="pval"><span data-w="24">220</span></div></div>
<div class="prow deep d-flex align-items-center"><div class="pname d-flex align-items-center"><div class="i1"></div><span>Y</span></div><div class="pval"><span data-w="24">150</span></div></div>
<div class="prow d-flex align-items-center"><div class="pname d-flex align-items-center"><div class="i1"></div><span class="gothic" data-w="14">幅</span></div><div class="pval"><span data-w="23">131</span></div></div>
<div class="prow deep d-flex align-items-center"><div class="pname d-flex align-items-center"><div class="i1"></div><span class="gothic" data-w="25">高さ</span></div><div class="pval"><span data-w="15">31</span></div></div>
<div class="prow d-flex align-items-center"><div class="pname d-flex align-items-center"><div class="arr"><svg width="12" height="8"><use href="#dn"/></svg></div><span data-w="65">sizePolicy</span></div><div class="pval"><span data-w="151">[Expanding, Fixed, 0, 0]</span></div></div>
<div class="prow deep d-flex align-items-center"><div class="pname d-flex align-items-center"><div class="i1"></div><span class="gothic" data-w="103">横方向のポリシー</span></div><div class="pval"><span data-w="69">Expanding</span></div></div>
<div class="prow d-flex align-items-center"><div class="pname d-flex align-items-center"><div class="i1"></div><span class="gothic" data-w="103">縦方向のポリシー</span></div><div class="pval"><span data-w="35">Fixed</span></div></div>
<div class="prow deep d-flex align-items-center"><div class="pname d-flex align-items-center"><div class="i1"></div><span class="gothic" data-w="110">横方向のストレッチ</span></div><div class="pval"><span>0</span></div></div>
<div class="prow d-flex align-items-center"><div class="pname d-flex align-items-center"><div class="i1"></div><span class="gothic" data-w="110">縦方向のストレッチ</span></div><div class="pval"><span>0</span></div></div>
<div class="prow deep d-flex align-items-center"><div class="pname d-flex align-items-center"><div class="arr ps-2"><svg width="8" height="12"><use href="#rt"/></svg></div><span data-w="90">minimumSize</span></div><div class="pval"><span data-w="34">0 × 0</span></div></div>
<div class="prow d-flex align-items-center"><div class="pname d-flex align-items-center"><div class="arr ps-2"><svg width="8" height="12"><use href="#rt"/></svg></div><span data-w="93">maximumSize</span></div><div class="pval"><span data-w="146">16777215 × 16777215</span></div></div>
<div class="prow deep d-flex align-items-center"><div class="pname d-flex align-items-center"><div class="arr ps-2"><svg width="8" height="12"><use href="#rt"/></svg></div><span data-w="93">sizeIncrement</span></div><div class="pval"><span data-w="34">0 × 0</span></div></div>
</div>
<div class="sbar d-flex flex-column align-items-center pb-2"><svg width="10" height="7" style="margin-top:8px"><use href="#up"/></svg><div class="thumb w-100 mb-auto" style="margin-top:6px;height:124px"></div><svg width="10" height="7"><use href="#dn"/></svg></div>
</div>
<div class="dockhead d-flex align-items-center gothic" style="margin-top:6px"><span class="me-auto" data-w="87">リソースブラウザ</span><svg width="30" height="10"><use href="#fx"/></svg></div>
<div class="d-flex align-items-center" style="height:34px;padding:1px 0 0 5px">
<svg width="24" height="24"><path d="M1 22l2-6L18 2l4 4L7 20z" fill="#f0ac38" stroke="#a87a2a"/><path d="M5 18L19 4" stroke="#ffd98a" stroke-width="1.500"/><path d="M17 3l3-2q3 1 3 4l-2 2z" fill="#b85f3c"/><path d="M1 22l2-6 4 4z" fill="#ead7a8"/></svg>
<svg width="22" height="22" style="margin-left:6px"><path d="M17.500 14.500A7.500 7.500 0 1 1 16 5" fill="none" stroke="#1b9630" stroke-width="5.500"/><path d="M20 0v11H9z" fill="#1f7d35"/></svg>
<div class="field gothic ms-auto" style="width:215px;margin-right:2px"><span data-w="40">フィルタ</span></div></div>
<div class="d-flex justify-content-between" style="height:152px"><div class="pane" style="width:243px;padding:1px 0 0 30px"><span data-w="105">&lt;resource root&gt;</span></div><div class="pane" style="width:243px"></div></div>
<div class="d-flex gothic" style="border-top:1px solid #a8a8a8;padding-left:2px"><div class="tabx d-flex align-items-center justify-content-center" style="width:167px"><span data-w="139">シグナル/スロットエディタ</span></div><div class="tabx d-flex align-items-center justify-content-center" style="width:121px"><span data-w="93">アクションエディタ</span></div><div class="tabx cur d-flex align-items-center justify-content-center" style="width:119px"><span data-w="87">リソースブラウザ</span></div></div>
</aside>
</main>
<div class="flex-grow-1"></div>

<footer class="taskbar d-flex">
<div class="d-flex align-items-center justify-content-center" style="width:61px"><svg width="20" height="20" fill="#fff"><path d="M0 3l8-1v8H0zM9 2l11-2v10H9zM0 11h8v8l-8-1zM9 11h11v9L9 19z"/></svg></div>
<div class="d-flex align-items-center justify-content-center" style="width:62px;padding-right:4px"><svg width="24" height="18" fill="none" stroke="#fff" stroke-width="1.400"><path d="M4.500 1h15v16h-15zM3 4H1v11h2M21 4h2v11h-2"/></svg></div>
<div class="slot d-flex align-items-center justify-content-center"><svg viewBox="0 0 28 28"><path d="M2 13C3 5 8 1 15 1c8 0 12 6 11 15H10c0 7 8 8 14 5v5C14 30 4 27 4 18c0-5 3-8 7-10-5 0-8 3-9 5zm8-1h9c0-6-8-6-9 0z" fill="#0a78d8"/></svg></div>
<div class="slot d-flex align-items-center justify-content-center"><svg viewBox="0 0 28 28" style="margin-right:2px"><path d="M12 2l4-1 9 9-6 3zM1 17l15-9 2 4-12 9z" fill="#f5851f"/><path d="M5 9h12l-2 4-9-1z" fill="#f5851f"/><circle cx="18" cy="16.500" r="9.500" fill="#f5851f"/><circle cx="18" cy="16" r="6.200" fill="#fff"/><circle cx="18.500" cy="16" r="3.600" fill="#1a4d8c"/></svg></div>
<div class="slot d-flex align-items-center justify-content-center position-relative"><svg viewBox="0 0 28 28"><path d="M0 3h12l2 3h14v19H0z" fill="#fbdf89"/><path d="M0 3h12v4H0z" fill="#f0b52a"/><path d="M2 4h7v2H2z" fill="#fff"/><path d="M5 26V16h18v10h-5v-6h-8v6z" fill="#38aee6"/></svg><i class="run two position-absolute"></i></div>
<div class="slot d-flex align-items-center justify-content-center position-relative"><svg viewBox="0 0 28 28"><path d="M1 3h26v21H1z" fill="#090909" stroke="#b7c0c7" stroke-width="1.300"/><path d="M1 3h26v3H1z" fill="#c7d3df"/><path d="M2 7h24v3C12 10 8 17 5 23H2z" fill="#333"/><text x="3" y="12" font-family="Liberation Mono" font-size="6" fill="#eee">C:\_</text></svg><i class="run position-absolute"></i></div>
<div class="slot d-flex align-items-center justify-content-center"><svg viewBox="0 0 28 28"><path d="M2 14L22 1l2 13-2 13z" fill="#1c1c1c"/><path d="M4 14l6-6 10-4-4 8H10zM4 14l6 6 10 4-4-8h-6zM18 13l4-8 1 9-1 9-4-8z" fill="#f4f4f4"/></svg></div>
<div class="slot d-flex align-items-center justify-content-center position-relative"><svg viewBox="0 0 28 28"><rect x="1" y="4" width="26" height="20" fill="#3c3c3c" stroke="#b2b2b2" stroke-width="1.500"/><path d="M1 4h26v2H1z" fill="#ddd"/><path d="M2 7h24v7H2z" fill="#595959"/><text x="4" y="14" font-family="Liberation Mono" font-size="6.500" fill="#ccc">C:\_</text></svg><i class="run two position-absolute"></i></div>
<div class="slot d-flex align-items-center justify-content-center"><svg viewBox="0 0 28 28"><path d="M14 4h13v20H14z" fill="#fff" stroke="#d24726" stroke-width="1.500"/><circle cx="19" cy="10" r="4" fill="#d24726"/><path d="M16 17h9M16 20h9" stroke="#d24726" stroke-width="1.500"/><path d="M0 4l16-3v26L0 24z" fill="#d24726"/><text x="3.500" y="20" font-family="Open Sans" font-weight="700" font-size="16" fill="#fff">P</text></svg></div>
<div class="slot d-flex align-items-center justify-content-center"><svg viewBox="0 0 28 28"><path d="M2 2l18-2 2 25-14 3z" fill="#d8cfae" stroke="#8c8468"/><circle cx="8" cy="6" r="2" fill="none" stroke="#555"/><circle cx="16" cy="5" r="2" fill="none" stroke="#555"/><path d="M7 12l10-1M7 16l10-1M8 20l11-1M9 24l10-2" stroke="#5b5747" stroke-width="1.400"/><path d="M25 4l-5 19-3 3 1-5 4-17z" fill="#327b77"/></svg></div>
<div class="slot d-flex align-items-center justify-content-center position-relative"><svg viewBox="0 0 28 28"><path d="M14 5C5 5 0 12 0 18c0 4 4 6 6 3s4-2 5 1c2 7 14 1 14-8 0-6-5-9-11-9z" fill="#cfe4f4" stroke="#7ea4c4"/><circle cx="5" cy="14" r="2.500" fill="#e23c34"/><circle cx="10" cy="9" r="2.500" fill="#f09a24"/><circle cx="17" cy="8.500" r="2.500" fill="#58b947"/><circle cx="12" cy="16" r="2.300" fill="#111"/><path d="M25 4L15 27" stroke="#c77a2e" stroke-width="2.500"/><path d="M20 8l4-8 4 2-3 8z" fill="#e0bb8c"/></svg><i class="run position-absolute"></i></div>
<div class="slot d-flex align-items-center justify-content-center"><svg viewBox="0 0 28 28"><path d="M14 1L1 14q-1 3 5 4l4 1-2 2 6 5 6-4-3-3 9-3q3-1 1-3z" fill="#252525"/><path d="M14 1l8 8-4 3-3-2-3 3-5-2z" fill="#e5e7ee"/><path d="M2 15c4 1 8 2 10 5M18 18l8-3" stroke="#aaa" stroke-width="1.500" fill="none"/></svg></div>
<div class="slot d-flex align-items-center justify-content-center"><svg viewBox="0 0 28 28"><path d="M0 0h28v28H0z" fill="#cae5fa"/><path d="M3 0h2v8H3z" fill="#f33"/><path d="M5 0h2v8H5z" fill="#fb4"/><path d="M7 0h2v8H7z" fill="#3c5"/><path d="M9 0h2v8H9z" fill="#a3f"/><path d="M4 15q9-8 20-1-8 5-20 1z" fill="#e8f6ff" stroke="#2f7fb8" stroke-width="1.300"/><path d="M4 11q10-5 20 1" fill="none" stroke="#2a6a9c" stroke-width="1.500"/><circle cx="15" cy="14" r="3.300" fill="#164d80"/><path d="M11 18h17v10H11z" fill="#e83d20"/><text x="12" y="26" font-family="Open Sans" font-weight="700" font-size="8.500" fill="#fff" textLength="15">PDF</text></svg></div>
<div class="slot d-flex align-items-center justify-content-center position-relative"><svg viewBox="0 0 28 28"><path d="M9 1C2 4-1 11 2 18c2 6 6 8 10 8l8 2c7-3 9-10 7-16C26 5 19-2 9 1z" fill="#174a8c"/><path d="M9 2c9-2 15 2 17 9l1 6-6-7C17 6 13 5 9 2z" fill="#3f9ad8"/><path d="M3 9l5-6 2 5z" fill="#2f7fc0"/><path d="M4 17l4-8 6 1 5 2 2 5-4 7-7 1-5-3z" fill="#f3f0e6"/><path d="M6 13l6 4 7-4" fill="none" stroke="#b8b2a2"/></svg><i class="run position-absolute"></i></div>
<div class="slot d-flex align-items-center justify-content-center position-relative"><svg viewBox="0 0 28 28"><circle cx="14" cy="14" r="13.500" fill="#e0443c"/><path d="M2.300 7.300A13.500 13.500 0 0 0 13 27.500L19.500 17 14 14 8.500 17z" fill="#2da352"/><path d="M26 8A13.500 13.500 0 0 1 13 27.500L20 16V8z" fill="#f8cc3c"/><circle cx="14" cy="14" r="6.300" fill="#fff"/><circle cx="14" cy="14" r="5" fill="#4386f3"/></svg><i class="run position-absolute"></i></div>
<div class="slot d-flex align-items-center justify-content-center"><svg viewBox="0 0 28 28"><path d="M0 0h28v28H0z" fill="#a90e2c"/><path d="M5.500 18q2-2 2-7M22.500 18q-2-2-2-7M9 10l5 4 5-4" fill="none" stroke="#fff" stroke-width="1.600"/><circle cx="8.500" cy="10" r="2.500" fill="#fff"/><circle cx="19.500" cy="10" r="2.500" fill="#fff"/><circle cx="14" cy="14.500" r="3" fill="#fff"/><circle cx="5.500" cy="18" r="2.600" fill="#fff"/><circle cx="22.500" cy="18" r="2.600" fill="#fff"/></svg></div>
<div class="slot d-flex align-items-center justify-content-center"><svg viewBox="0 0 28 28"><path d="M1 3l14-3 6 22-12 4z" fill="#c1c7d2" stroke="#777"/><path d="M15 0l3 1 6 22-3-1zM9 26l12-4 3 1-12 5z" fill="#555b66"/><text x="3" y="19" font-family="Liberation Serif" font-size="19" font-weight="700" fill="#111dc7" transform="rotate(-8 12 14)">T</text><path d="M27 6L13 27" stroke="#a29b5c" stroke-width="1.500"/></svg></div>
<div class="slot d-flex align-items-center justify-content-center position-relative"><svg viewBox="0 0 28 28" fill="none" stroke="#fff" stroke-width="1.400"><path d="M14 0v28M2 5l24 18M2 23L26 5M14 3L6 6 3 14l3 8 8 4 8-4 3-8-3-8zM14 9l-4 2-2 4 2 3 4 2 4-2 2-3-2-4z"/><path d="M3 15c5-7 7 4 12 2s3-7 10-4" stroke="#f21818" stroke-width="3"/></svg><i class="run position-absolute"></i></div>
<div class="slot cur d-flex align-items-center justify-content-center position-relative"><svg viewBox="0 0 18 17" style="width:25px;height:24px;margin-top:4px"><use href="#qt"/></svg><i class="run position-absolute"></i></div>
<div class="d-flex align-items-center ms-auto" style="padding-right:5px">
<svg width="16" height="10" style="margin-right:12px"><path d="M1 9l7-7 7 7" fill="none" stroke="#fff" stroke-width="1.500"/></svg>
<svg width="21" height="16" fill="none" stroke="#fff"><path d="M5 4h14v9H4V9M20 6.500v4" stroke-width="1.200"/><path d="M7 6h10v5H7z" fill="#fff"/><path d="M1.500 1v2M4.500 1v2M.5 3.500h5v2l-1.500 1v5h-2v-5l-1.500-1z" fill="#000"/></svg>
<svg width="21" height="20" style="margin:0 11px 0 9px" fill="none" stroke="#fff" stroke-width="1.200"><path d="M1 7h2.500L8 3v14l-4.500-4H1zM10.500 8q1.500 2 0 4"/><path d="M13 6q3 4 0 8M16 3q5 7 0 14" stroke="#777"/></svg>
<svg width="15" height="20" fill="none" stroke="#fff" stroke-width="1.500"><path d="M1 19L7.500 1 14 19M3.500 13h8"/></svg>
<div class="d-flex flex-column align-items-center" style="margin:0 24px 0 14px;line-height:23px"><span data-w="34">20:05</span><span data-w="76">2017/11/30</span></div>
<svg width="32" height="34"><path d="M0 7h20v17H9l-3 4v-4H0z" fill="#fff"/><path d="M3 11.500h13M3 15.500h13M3 19.500h8" stroke="#000" stroke-width="1.300"/><circle cx="19" cy="26" r="10" fill="#2b2b2b" stroke="#777"/><text x="15" y="31.500" font-family="Open Sans" font-weight="700" font-size="14" fill="#fff">3</text></svg>
<div style="width:1px;height:50px;background:#666;margin-left:12px"></div>
</div>
</footer>
</div>
<script>
// Condense each label to the width stored in data-w.
document.querySelectorAll('[data-w]').forEach(function(el){
  var s=document.createElement('span');
  s.textContent=el.textContent;
  el.textContent='';
  el.appendChild(s);
  var w=+el.dataset.w,n=s.getBoundingClientRect().width;
  el.style.width=w+'px';
  s.style.transform='scaleX('+w/n+')';
});
</script>
</body>
</html>
